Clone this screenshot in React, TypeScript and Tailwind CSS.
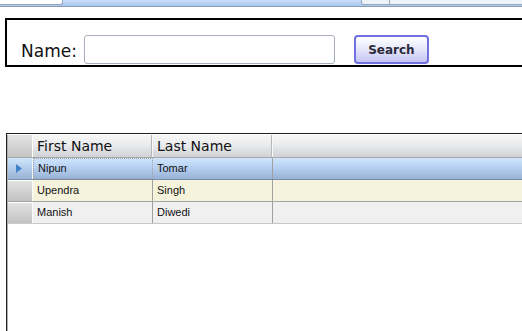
import React from "react";

const rows = [
  { first: "Nipun", last: "Tomar", selected: true },
  { first: "Upendra", last: "Singh", selected: false },
  { first: "Manish", last: "Diwedi", selected: false },
];

export default function App() {
  return (
    <div className="w-[522px] h-[331px] overflow-hidden bg-white relative">
      {/* top strip */}
      <div className="h-[7px] flex bg-gradient-to-b from-[#c9ddf5] to-[#a9c6ee] border-b border-[#8c9cb4]">
        <div className="w-[63px] h-[5px] bg-white border-b border-r border-[#9aa8bc] rounded-br-[3px]" />
        <div className="w-[298px]" />
        <div className="w-[29px] h-[5px] bg-[#eef3fa] border-b border-l border-r border-[#9aa8bc] rounded-bl-[3px]" />
        <div className="flex-1 h-[5px] bg-[#eef3fa] border-b border-[#9aa8bc]" />
      </div>

      {/* search box */}
      <div className="mt-[11px] ml-[5px] h-[49px] border-2 border-r-0 border-black flex items-end pb-[1px] pl-[14px]">
        <span
          className="text-[17px] text-[#111] leading-none mb-[4px] mr-[7px]"
          style={{ fontFamily: '"DejaVu Sans", sans-serif' }}
        >
          Name:
        </span>
        <div className="w-[251px] h-[29px] border border-[#a7b0ba] rounded-[3px] bg-white" />
        <button
          className="ml-[19px] w-[75px] h-[29px] rounded-[4px] border-2 border-[#7070e0] bg-gradient-to-b from-[#ffffff] via-[#e6e6fb] to-[#c4c4f4] text-[12px] font-bold text-[#2a2a3a] flex items-center justify-center"
          style={{ fontFamily: '"DejaVu Sans", sans-serif' }}
        >
          Search
        </button>
      </div>

      {/* grid */}
      <div className="mt-[66px] ml-[6px] h-[200px] border-t border-l border-[#202020] flex">
        <div className="w-[1px] bg-[#b0b0b0] mt-[1px]" />
        <div className="flex-1 flex flex-col pt-[1px]">
          {/* header */}
          <div className="flex h-[23px] bg-gradient-to-b from-[#f7f7f7] via-[#e8e9eb] to-[#cfd1d5] border-b border-[#a8a8a8]">
            <div className="w-[25px] h-full m-0 border-r border-white bg-gradient-to-b from-[#e4e4e4] to-[#c4c4c4]" />
            <div
              className="w-[120px] border-r border-[#f8f8f8] shadow-[inset_-1px_0_0_#b8b8b8] flex items-center pl-[4px] pt-[1px] text-[14px] text-[#111]"
              style={{ fontFamily: '"DejaVu Sans", sans-serif' }}
            >
              First Name
            </div>
            <div
              className="w-[120px] border-r border-[#f8f8f8] shadow-[inset_-1px_0_0_#b8b8b8] flex items-center pl-[4px] pt-[1px] text-[14px] text-[#111]"
              style={{ fontFamily: '"DejaVu Sans", sans-serif' }}
            >
              Last Name
            </div>
            <div className="flex-1" />
          </div>
          {rows.map((r, i) => {
            const rowBg = r.selected
              ? "bg-gradient-to-b from-[#cfe6fc] via-[#b4cef0] to-[#98b2d6] border-b border-[#7a8ca8]"
              : i === 1
              ? "bg-[#f5f3dc] border-b border-[#a4a4a4]"
              : "bg-[#f0f0f0] border-b border-[#c8c8c8]";
            return (
              <div key={r.first} className={`flex h-[22px] ${rowBg}`}>
                <div
                  className={`w-[25px] border-r border-[#f4f4f4] flex items-center pl-[8px] ${
                    r.selected
                      ? "bg-gradient-to-b from-[#cfe6fc] to-[#98b2d6]"
                      : "bg-gradient-to-b from-[#e2e2e2] to-[#c2c2c2] border-t border-white"
                  }`}
                >
                  {r.selected && (
                    <svg width="6" height="9" viewBox="0 0 6 9">
                      <path d="M0 0 L6 4.5 L0 9 Z" fill="#3f82c8" />
                    </svg>
                  )}
                </div>
                <div
                  className={`w-[120px] border-r border-[#a0a0a0] flex items-center pl-[4px] text-[11px] text-[#111] ${
                    r.selected ? "border border-dotted border-[#2a3a5a] pl-[3px]" : ""
                  }`}
                  style={{ fontFamily: '"Liberation Sans", sans-serif' }}
                >
                  {r.first}
                </div>
                <div
                  className="w-[120px] border-r border-[#a0a0a0] flex items-center pl-[4px] text-[11px] text-[#111]"
                  style={{ fontFamily: '"Liberation Sans", sans-serif' }}
                >
                  {r.last}
                </div>
                <div className="flex-1" />
              </div>
            );
          })}
        </div>
      </div>
    </div>
  );
}
